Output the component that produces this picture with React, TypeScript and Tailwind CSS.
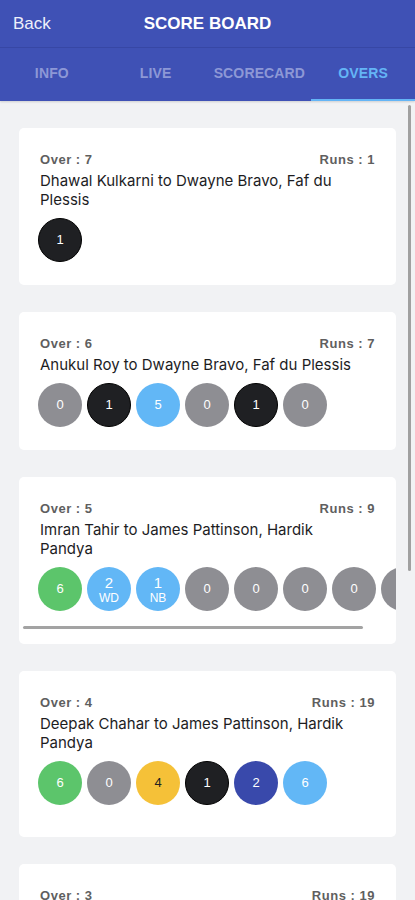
import React from 'react';

type Ball = { v: string; kind: 'dot' | 'run' | 'four' | 'six' | 'extra' | 'two' | 'boundary'; label?: string };

const ballColor: Record<Ball['kind'], string> = {
  dot: 'bg-[#8e8e93] text-white',
  run: 'bg-[#1f2023] text-white border border-[#000]',
  four: 'bg-[#f5c138] text-[#222]',
  six: 'bg-[#5cc56b] text-white',
  extra: 'bg-[#62b7f6] text-white',
  two: 'bg-[#3949ab] text-white',
  boundary: 'bg-[#62b7f6] text-white',
};

type Over = {
  over: number;
  runs: number;
  text: string;
  balls: Ball[];
  scroll?: boolean;
  extraBottom?: boolean;
};

const overs: Over[] = [
  {
    over: 7,
    runs: 1,
    text: 'Dhawal Kulkarni to Dwayne Bravo, Faf du Plessis',
    balls: [{ v: '1', kind: 'run' }],
  },
  {
    over: 6,
    runs: 7,
    text: 'Anukul Roy to Dwayne Bravo, Faf du Plessis',
    balls: [
      { v: '0', kind: 'dot' },
      { v: '1', kind: 'run' },
      { v: '5', kind: 'boundary' },
      { v: '0', kind: 'dot' },
      { v: '1', kind: 'run' },
      { v: '0', kind: 'dot' },
    ],
  },
  {
    over: 5,
    runs: 9,
    text: 'Imran Tahir to James Pattinson, Hardik Pandya',
    scroll: true,
    balls: [
      { v: '6', kind: 'six' },
      { v: '2', kind: 'extra', label: 'WD' },
      { v: '1', kind: 'extra', label: 'NB' },
      { v: '0', kind: 'dot' },
      { v: '0', kind: 'dot' },
      { v: '0', kind: 'dot' },
      { v: '0', kind: 'dot' },
      { v: '0', kind: 'dot' },
    ],
  },
  {
    over: 4,
    runs: 19,
    text: 'Deepak Chahar to James Pattinson, Hardik Pandya',
    extraBottom: true,
    balls: [
      { v: '6', kind: 'six' },
      { v: '0', kind: 'dot' },
      { v: '4', kind: 'four' },
      { v: '1', kind: 'run' },
      { v: '2', kind: 'two' },
      { v: '6', kind: 'boundary' },
    ],
  },
  {
    over: 3,
    runs: 19,
    text: 'Deepak Chahar to Suryakumar Yadav, Ishan Kishan',
    balls: [
      { v: '4', kind: 'four' },
      { v: '1', kind: 'run' },
      { v: '6', kind: 'six' },
      { v: '0', kind: 'dot' },
    ],
  },
];

function BallChip({ ball }: { ball: Ball }) {
  return (
    <div
      className={`w-[44px] h-[44px] shrink-0 rounded-full flex flex-col items-center justify-center ${ballColor[ball.kind]}`}
    >
      {ball.label ? (
        <>
          <span className="text-[15px] leading-[17px]">{ball.v}</span>
          <span className="text-[12px] leading-[14px]">{ball.label}</span>
        </>
      ) : (
        <span className="text-[13px] font-medium">{ball.v}</span>
      )}
    </div>
  );
}

function OverCard({ o }: { o: Over }) {
  return (
    <div
      className={`bg-white rounded-[5px] pl-[19px] pt-[24px] ${o.scroll ? 'pb-[15px]' : o.extraBottom ? 'pb-[32px] pr-[19px]' : 'pb-[23px] pr-[19px]'}`}
    >
      <div className={`px-[2px] ${o.scroll ? 'mr-[19px]' : ''}`}>
        <div className="flex justify-between text-[13px] leading-[16px] font-semibold tracking-[0.04em] text-[#5f5f5f]">
          <span>Over : {o.over}</span>
          <span>Runs : {o.runs}</span>
        </div>
        <div
          className="mt-[3px] pr-[10px] text-[15px] leading-[19px] text-[#1d1d1f]"
          style={{ fontFamily: 'Inter, "Liberation Sans", sans-serif' }}
        >
          {o.text}
        </div>
      </div>
      <div className="mt-[9px] flex gap-[5px] overflow-hidden">
        {o.balls.map((b, i) => (
          <BallChip key={i} ball={b} />
        ))}
      </div>
      {o.scroll && <div className="mt-[15px] ml-[-15px] h-[3px] w-[340px] rounded-full bg-[#a3a3a3]" />}
    </div>
  );
}

export default function App() {
  const tabs = ['INFO', 'LIVE', 'SCORECARD', 'OVERS'];
  return (
    <div
      className="relative w-[415px] h-[900px] overflow-hidden bg-[#f1f2f4]"
      style={{ fontFamily: '"Liberation Sans", Arial, sans-serif' }}
    >
      {/* Header */}
      <div className="bg-[#3f51b5] shadow-[0_1px_2px_rgba(0,0,0,0.15)]">
        <div className="relative h-[48px] flex items-center border-b border-[#3747a5]">
          <span className="pl-[13px] text-[17px] text-[#eef0fb]">Back</span>
          <span className="absolute left-0 right-0 text-center text-[17px] font-bold text-white pointer-events-none">
            SCORE BOARD
          </span>
        </div>
        <div className="grid grid-cols-4 h-[53px]">
          {tabs.map((t) => {
            const active = t === 'OVERS';
            return (
              <div
                key={t}
                className={`flex items-center justify-center text-[14px] font-semibold tracking-[0.01em] border-b-2 ${active ? 'text-[#64b5f6] border-[#64b5f6]' : 'text-[#8d98d6] border-transparent'}`}
              >
                {t}
              </div>
            );
          })}
        </div>
      </div>

      {/* Overs list */}
      <div className="flex flex-col gap-[27px] px-[19px] pt-[27px]">
        {overs.map((o) => (
          <OverCard key={o.over} o={o} />
        ))}
      </div>

      {/* scroll indicator */}
      <div className="absolute right-[4px] top-[105px] h-[466px] w-[3px] rounded-full bg-[#a0a0a0]" />
    </div>
  );
}
